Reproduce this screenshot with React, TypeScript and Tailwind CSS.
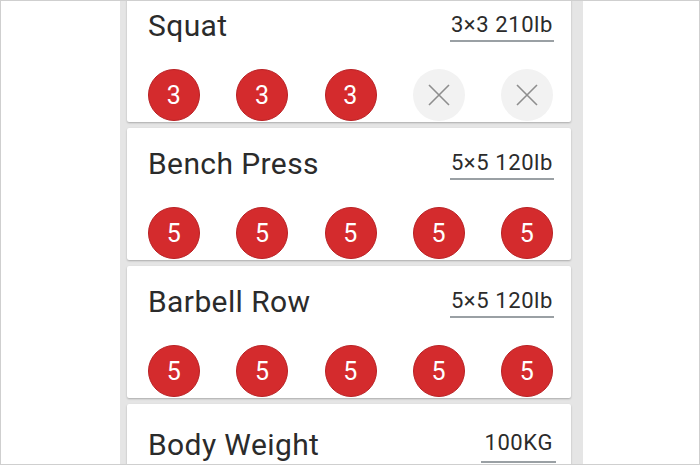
import React from "react";

type Lift = {
  name: string;
  target: string;
  sets: (number | null)[];
};

const LIFTS: Lift[] = [
  { name: "Squat", target: "3×3 210lb", sets: [3, 3, 3, null, null] },
  { name: "Bench Press", target: "5×5 120lb", sets: [5, 5, 5, 5, 5] },
  { name: "Barbell Row", target: "5×5 120lb", sets: [5, 5, 5, 5, 5] },
];

function SetCircle({ reps }: { reps: number | null }) {
  if (reps === null) {
    return (
      <div className="w-[52px] h-[52px] rounded-full bg-[#f2f2f2] flex items-center justify-center">
        <svg width="24" height="24" viewBox="0 0 24 24" fill="none">
          <path d="M2 2L22 22M22 2L2 22" stroke="#8e8e8e" strokeWidth="1.6" />
        </svg>
      </div>
    );
  }
  return (
    <div className="w-[52px] h-[52px] rounded-full bg-[#d42b2d] border border-[#b92225] flex items-center justify-center text-white text-[25px] leading-none tracking-[0.5px]">
      {reps}
    </div>
  );
}

function LiftCard({ lift, first }: { lift: Lift; first?: boolean }) {
  return (
    <div
      className={`bg-white rounded-[2px] shadow-[0_1px_2px_rgba(0,0,0,0.25)] pl-[21px] pr-[17px] pt-[20px] h-[132px] ${
        first ? "-mt-[11px]" : ""
      }`}
    >
      <div className="flex items-start justify-between h-[32px]">
        <span className="text-[30px] leading-[32px] tracking-[0.4px] text-[#2b2b2b]">{lift.name}</span>
        <span className="mt-[3px] border-b-2 border-[#9aa0a4] px-[1px] pb-[3px] text-[22px] leading-[24px] tracking-[0.6px] text-[#2b2b2b]">
          {lift.target}
        </span>
      </div>
      <div className="mt-[27px] flex justify-between pr-[1px]">
        {lift.sets.map((r, i) => (
          <SetCircle key={i} reps={r} />
        ))}
      </div>
    </div>
  );
}

export default function App() {
  return (
    <div
      className="w-[700px] h-[465px] bg-white border border-[#cfcfcf] overflow-hidden"
      style={{ fontFamily: "Roboto, 'Liberation Sans', sans-serif" }}
    >
      <div className="ml-[119px] w-[463px] h-full bg-[#e5e5e5] pl-[7px] pr-[12px] overflow-hidden">
        <div className="flex flex-col gap-[6px]">
          {LIFTS.map((l, i) => (
            <LiftCard key={l.name} lift={l} first={i === 0} />
          ))}
          <div className="bg-white rounded-[2px] shadow-[0_1px_2px_rgba(0,0,0,0.25)] pl-[21px] pr-[15px] pt-[25px] h-[80px]">
            <div className="flex items-start justify-between">
              <span className="text-[30px] leading-[32px] tracking-[0.4px] text-[#2b2b2b]">Body Weight</span>
              <span className="mt-[2px] border-b-2 border-[#9aa0a4] px-[3px] pb-[6px] text-[22px] leading-[24px] tracking-[0.6px] text-[#2b2b2b]">
                100KG
              </span>
            </div>
          </div>
        </div>
      </div>
    </div>
  );
}
